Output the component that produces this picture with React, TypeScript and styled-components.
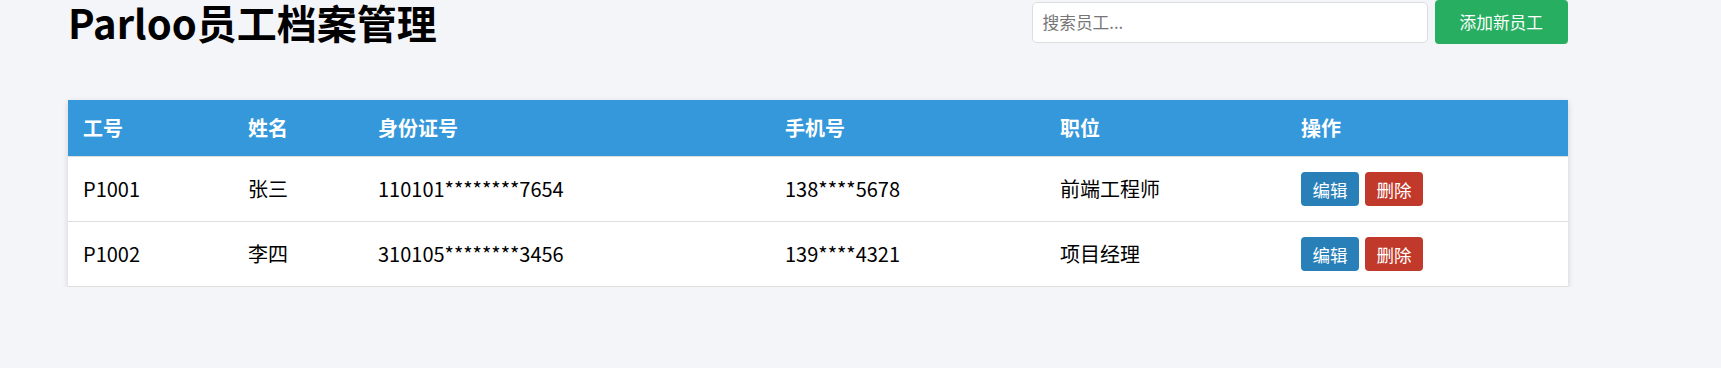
import React from 'react';
import styled, { createGlobalStyle } from 'styled-components';

interface Employee {
    id: string;
    name: string;
    idCard: string;
    phone: string;
    position: string;
}

const employees: Employee[] = [
    { id: 'P1001', name: '张三', idCard: '110101********7654', phone: '138****5678', position: '前端工程师' },
    { id: 'P1002', name: '李四', idCard: '310105********3456', phone: '139****4321', position: '项目经理' },
];

const columns = [
    { label: '工号', width: 165 },
    { label: '姓名', width: 130 },
    { label: '身份证号', width: 407 },
    { label: '手机号', width: 275 },
    { label: '职位', width: 241 },
    { label: '操作', width: 282 },
];

const GlobalStyle = createGlobalStyle`
    html, body {
        margin: 0;
        padding: 0;
        background: #f4f5f9;
    }

    body {
        font-family: "Noto Sans CJK SC", sans-serif;
        color: #000;
    }
`;

const Page = styled.div`
    width: 1500px;
    padding-left: 68px;
`;

const Header = styled.header`
    display: flex;
    align-items: center;
    justify-content: space-between;
    height: 44px;
    margin-bottom: 56px;
`;

const Title = styled.h1`
    margin: 0;
    font-size: 40px;
    font-weight: 700;
    line-height: 44px;
`;

const Actions = styled.div`
    display: flex;
    align-items: center;
    gap: 7px;
`;

const SearchInput = styled.input`
    box-sizing: border-box;
    width: 396px;
    height: 41px;
    padding: 0 10px;

    border: 1px solid #dcdde2;
    border-radius: 5px;
    background: #fff;

    font-family: inherit;
    font-size: 16.7px;
    outline: none;

    &::placeholder {
        color: #767676;
    }
`;

const AddButton = styled.button`
    box-sizing: border-box;
    height: 44px;
    padding: 0 25px;

    border: none;
    border-radius: 4px;
    background: #27ae60;
    color: #fff;

    font-family: inherit;
    font-size: 16.7px;
`;

const Table = styled.table`
    width: 1500px;
    table-layout: fixed;
    border-collapse: collapse;
    background: #fff;
    box-shadow: 0 2px 6px rgba(0, 0, 0, 0.15);
`;

const HeadCell = styled.th<{ $width: number }>`
    width: ${props => props.$width}px;
    padding: 15px;
    box-sizing: border-box;

    background: #3498db;
    color: #fff;
    border-bottom: 1px solid #dddddd;

    font-size: 20px;
    font-weight: 700;
    line-height: 26px;
    text-align: left;
`;

const Cell = styled.td`
    height: 34px;
    padding: 15px;
    border-bottom: 1px solid #dddddd;

    font-size: 20px;
    line-height: 26px;
    vertical-align: middle;
    white-space: nowrap;
`;

const ActionButton = styled.button<{ $variant: 'edit' | 'delete' }>`
    box-sizing: border-box;
    height: 34px;
    width: 58px;
    padding: 0;
    margin-right: 6px;

    border: none;
    border-radius: 4px;
    background: ${props => (props.$variant === 'edit' ? '#2980b9' : '#c0392b')};
    color: #fff;

    font-family: inherit;
    font-size: 17.5px;
    vertical-align: middle;
`;

const EmployeeRow = ({ employee }: { employee: Employee }) => (
    <tr>
        <Cell>{employee.id}</Cell>
        <Cell>{employee.name}</Cell>
        <Cell>{employee.idCard}</Cell>
        <Cell>{employee.phone}</Cell>
        <Cell>{employee.position}</Cell>
        <Cell>
            <ActionButton $variant="edit">编辑</ActionButton>
            <ActionButton $variant="delete">删除</ActionButton>
        </Cell>
    </tr>
);

const App = () => (
    <>
        <GlobalStyle />
        <Page>
            <Header>
                <Title>Parloo员工档案管理</Title>
                <Actions>
                    <SearchInput placeholder="搜索员工..." />
                    <AddButton>添加新员工</AddButton>
                </Actions>
            </Header>
            <Table>
                <thead>
                    <tr>
                        {columns.map(col => (
                            <HeadCell key={col.label} $width={col.width}>{col.label}</HeadCell>
                        ))}
                    </tr>
                </thead>
                <tbody>
                    {employees.map(emp => <EmployeeRow key={emp.id} employee={emp} />)}
                </tbody>
            </Table>
        </Page>
    </>
);

export default App;
